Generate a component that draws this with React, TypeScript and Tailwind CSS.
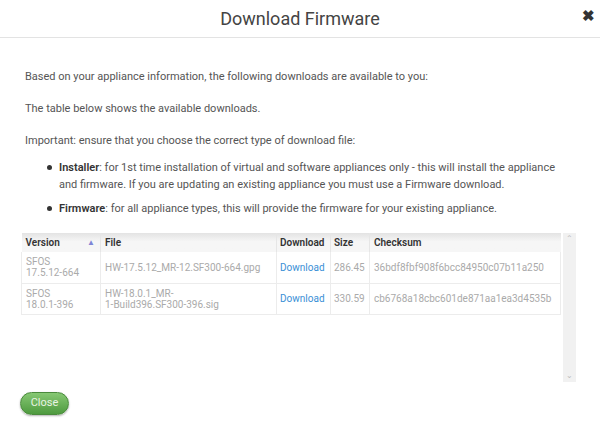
import React from "react";

type Row = {
  version: string[];
  file: string[];
  size: string;
  checksum: string;
};

const rows: Row[] = [
  {
    version: ["SFOS", "17.5.12-664"],
    file: ["HW-17.5.12_MR-12.SF300-664.gpg"],
    size: "286.45",
    checksum: "36bdf8fbf908f6bcc84950c07b11a250",
  },
  {
    version: ["SFOS", "18.0.1-396"],
    file: ["HW-18.0.1_MR-", "1-Build396.SF300-396.sig"],
    size: "330.59",
    checksum: "cb6768a18cbc601de871aa1ea3d4535b",
  },
];

export default function App() {
  return (
    <div className="h-[423px] w-[600px] overflow-hidden bg-white font-['Roboto',sans-serif] text-[#555]">
      <div className="relative flex h-[38px] items-center justify-center border-b border-[#e3e3e3]">
        <h1 className="text-[18px] text-[#444]">Download Firmware</h1>
        <span className="absolute right-[5px] top-[9px] text-[15px] font-bold leading-none text-[#333]">
          ✖
        </span>
      </div>

      <div className="px-[25px] pt-[31px] text-[11px] leading-[16px]">
        <p>Based on your appliance information, the following downloads are available to you:</p>
        <p className="mt-[16px]">The table below shows the available downloads.</p>
        <p className="mt-[16px]">Important: ensure that you choose the correct type of download file:</p>
        <ul className="mt-[10px] pl-[34px]">
          <li className="relative leading-[17px]">
            <span className="absolute left-[-12px] top-[6px] h-[5px] w-[5px] rounded-full bg-[#333]" />
            <b className="font-semibold text-[#333]">Installer</b>
            {": for 1st time installation of virtual and software appliances only - this will install the appliance and firmware. If you are updating an existing appliance you must use a Firmware download."}
          </li>
          <li className="relative mt-[7px] leading-[17px]">
            <span className="absolute left-[-12px] top-[6px] h-[5px] w-[5px] rounded-full bg-[#333]" />
            <b className="font-semibold text-[#333]">Firmware</b>
            {": for all appliance types, this will provide the firmware for your existing appliance."}
          </li>
        </ul>
      </div>

      <div className="ml-[21px] mt-[16px] flex h-[149px] w-[555px]">
        <div className="w-[540px]">
          <table className="w-full border-collapse text-[10px]">
            <thead>
              <tr className="bg-gradient-to-b from-[#e3e3e3] to-[#f6f6f6] to-[45%] text-left text-[#333]">
                <th className="relative h-[19px] w-[79px] border-r border-[#e6e6e6] pl-[4px] font-semibold">
                  Version
                  <span className="absolute right-[5px] top-[4px] text-[8px] text-[#7f86d6]">▲</span>
                </th>
                <th className="h-[19px] w-[176px] border-r border-[#e6e6e6] pl-[4px] font-semibold">File</th>
                <th className="h-[19px] w-[54px] border-r border-[#e6e6e6] pl-[3px] font-semibold">Download</th>
                <th className="h-[19px] w-[39px] border-r border-[#e6e6e6] pl-[3px] font-semibold">Size</th>
                <th className="h-[19px] pl-[4px] font-semibold">Checksum</th>
              </tr>
            </thead>
            <tbody className="text-[#aaa]">
              {rows.map((r) => (
                <tr key={r.size} className="border-b border-[#ececec] leading-[11px]">
                  <td className="h-[31px] border-r border-l border-[#ececec] pl-[4px]">
                    {r.version.map((v) => (
                      <div key={v}>{v}</div>
                    ))}
                  </td>
                  <td className="border-r border-[#ececec] pl-[4px]">
                    {r.file.map((f) => (
                      <div key={f}>{f}</div>
                    ))}
                  </td>
                  <td className="border-r border-[#ececec] pl-[3px] text-[#3a8fd6]">Download</td>
                  <td className="border-r border-[#ececec] pl-[3px]">{r.size}</td>
                  <td className="border-r border-[#ececec] pl-[4px]">{r.checksum}</td>
                </tr>
              ))}
            </tbody>
          </table>
        </div>
        <div className="ml-[2px] flex w-[13px] flex-col items-center justify-between bg-[#f1f1f1] py-[2px] text-[8px] leading-none text-[#bbb]">
          <span>⌃</span>
          <span>⌄</span>
        </div>
      </div>

      <div className="ml-[20px] mt-[10px] flex">
        <button className="h-[23px] w-[49px] rounded-full border border-[#4a8a3c] bg-gradient-to-b from-[#86c873] to-[#4e9a3f] text-[11px] text-[#e8f3e2] shadow-[0_1px_2px_rgba(0,0,0,0.3)]">
          Close
        </button>
      </div>
    </div>
  );
}
